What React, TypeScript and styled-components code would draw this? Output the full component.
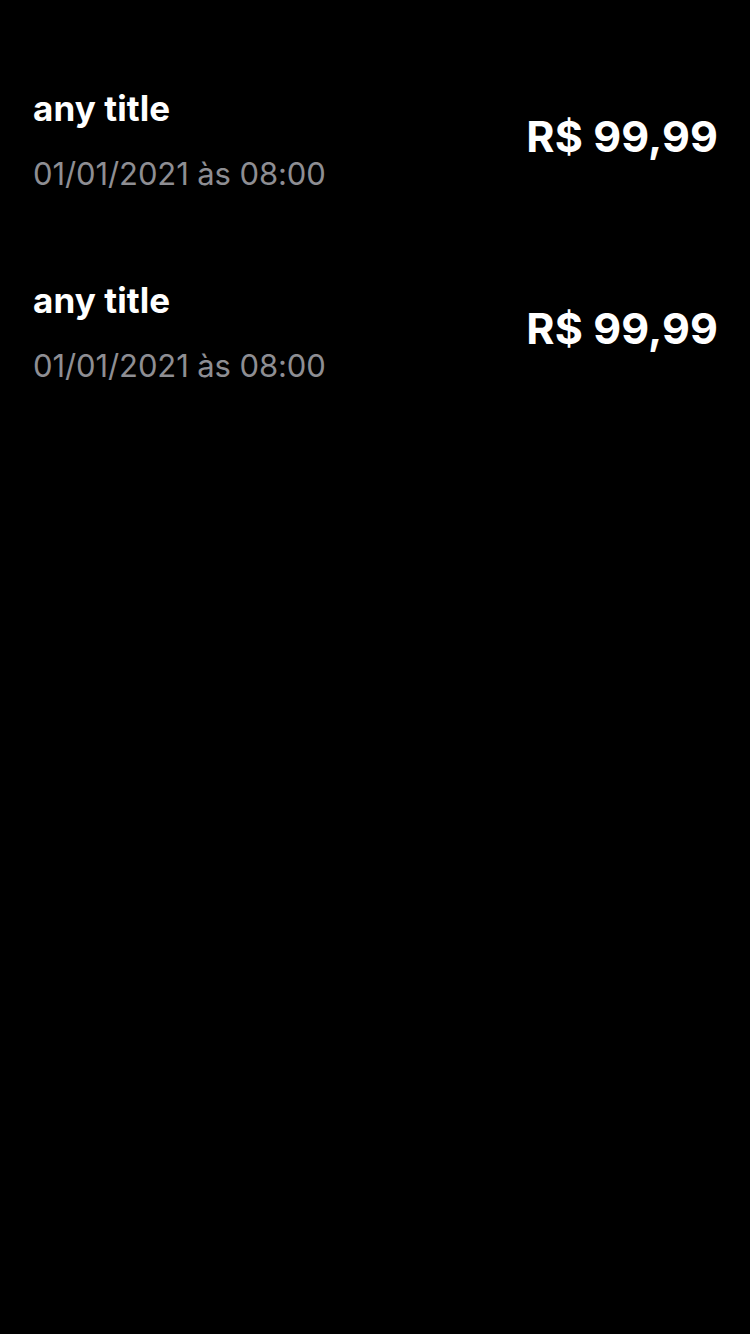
import React from "react";
import styled, { createGlobalStyle } from "styled-components";

const Global = createGlobalStyle`
  html, body { margin: 0; padding: 0; background: #000; }
  body { font-family: Inter, "Noto Sans", sans-serif; }
`;

const Page = styled.div`
  min-height: 1334px;
  background: #000;
  padding: 82px 32px 0 33px;
  box-sizing: border-box;
  display: flex;
  flex-direction: column;
  gap: 82px;
`;

const Row = styled.div`
  display: flex;
  align-items: center;
  justify-content: space-between;
`;

const Info = styled.div`
  display: flex;
  flex-direction: column;
  gap: 22px;
`;

const Title = styled.div`
  color: #fff;
  font-size: 35px;
  font-weight: 700;
  line-height: 52px;
  letter-spacing: 0.1px;
`;

const DateText = styled.div`
  color: #8e8e93;
  font-size: 31px;
  line-height: 36px;
  letter-spacing: -0.1px;
`;

const Price = styled.div`
  color: #fff;
  font-size: 43px;
  font-weight: 700;
  line-height: 52px;
  margin-top: -2px;
  letter-spacing: 0.1px;
`;

const items = [
  { title: "any title", date: "01/01/2021 às 08:00", price: "R$ 99,99" },
  { title: "any title", date: "01/01/2021 às 08:00", price: "R$ 99,99" },
];

export default function App() {
  return (
    <>
      <Global />
      <Page>
        {items.map((it, i) => (
          <Row key={i}>
            <Info>
              <Title>{it.title}</Title>
              <DateText>{it.date}</DateText>
            </Info>
            <Price>{it.price}</Price>
          </Row>
        ))}
      </Page>
    </>
  );
}
